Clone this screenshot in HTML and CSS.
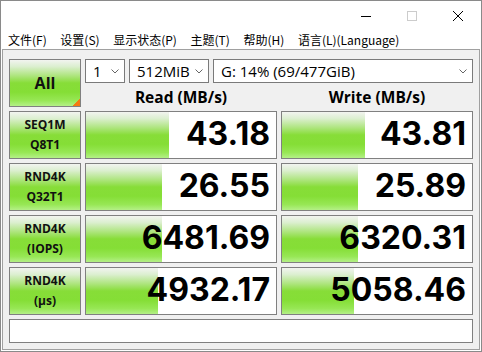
FILE: index.html
```html
<!DOCTYPE html>
<html lang="zh">
<head>
<meta charset="utf-8">
<title>CrystalDiskMark</title>
<link rel="stylesheet" href="styles.css">
</head>
<body>
<div class="window">
  <div class="titlebar">
    <div class="capbtn"><svg width="10" height="10" viewBox="0 0 10 10"><path d="M0 5.5H10" stroke="#000" stroke-width="1"/></svg></div>
    <div class="capbtn"><svg width="10" height="10" viewBox="0 0 10 10"><rect x="0.5" y="0.5" width="9" height="9" fill="none" stroke="#cccccc" stroke-width="1"/></svg></div>
    <div class="capbtn"><svg width="10" height="10" viewBox="0 0 10 10"><path d="M0 0L10 10M10 0L0 10" stroke="#000" stroke-width="1"/></svg></div>
  </div>
  <div class="menubar">
    <span class="mi">文件(F)</span>
    <span class="mi">设置(S)</span>
    <span class="mi">显示状态(P)</span>
    <span class="mi">主题(T)</span>
    <span class="mi">帮助(H)</span>
    <span class="mi">语言(L)(Language)</span>
  </div>
  <div class="frame">
    <div class="grid">
      <div class="btn all">All</div>
      <div class="top">
        <div class="combos">
          <div class="combo c1"><span>1</span><svg class="chev" width="8" height="5" viewBox="0 0 8 5"><path d="M0.5 0.5L4 4L7.5 0.5" fill="none" stroke="#666" stroke-width="1"/></svg></div>
          <div class="combo c2"><span>512MiB</span><svg class="chev" width="8" height="5" viewBox="0 0 8 5"><path d="M0.5 0.5L4 4L7.5 0.5" fill="none" stroke="#666" stroke-width="1"/></svg></div>
          <div class="combo c3"><span>G: 14% (69/477GiB)</span><svg class="chev" width="8" height="5" viewBox="0 0 8 5"><path d="M0.5 0.5L4 4L7.5 0.5" fill="none" stroke="#666" stroke-width="1"/></svg></div>
        </div>
        <div class="heads">
          <div class="head">Read (MB/s)</div>
          <div class="head">Write (MB/s)</div>
        </div>
      </div>

      <div class="btn lbl"><span>SEQ1M</span><span>Q8T1</span></div>
      <div class="val" style="--w:83px">43.18</div>
      <div class="val" style="--w:83px">43.81</div>

      <div class="btn lbl"><span>RND4K</span><span>Q32T1</span></div>
      <div class="val" style="--w:76px">26.55</div>
      <div class="val" style="--w:76px">25.89</div>

      <div class="btn lbl"><span>RND4K</span><span>(IOPS)</span></div>
      <div class="val" style="--w:76px">6481.69</div>
      <div class="val" style="--w:76px">6320.31</div>

      <div class="btn lbl"><span>RND4K</span><span>(μs)</span></div>
      <div class="val" style="--w:72px">4932.17</div>
      <div class="val" style="--w:72px">5058.46</div>

      <div class="status"></div>
    </div>
  </div>
</div>
</body>
</html>
```

FILE: styles.css
```css
html, body {
  margin: 0;
  padding: 0;
  background: #ffffff;
  overflow: hidden;
}

.window {
  box-sizing: border-box;
  width: 482px;
  height: 352px;
  border: 1px solid #8a8a8a;
  background: #ffffff;
  display: flex;
  flex-direction: column;
  font-family: "Open Sans", "Noto Sans", sans-serif;
}

.titlebar {
  height: 29px;
  display: flex;
  justify-content: flex-end;
  flex: none;
}

.capbtn {
  width: 46px;
  height: 29px;
  display: flex;
  align-items: center;
  justify-content: center;
}

.capbtn svg {
  display: block;
}

.menubar {
  height: 19px;
  flex: none;
  display: flex;
  gap: 13.6px;
  padding-left: 7px;
  font-family: "Noto Sans CJK SC", "Noto Sans", sans-serif;
  font-size: 12px;
  line-height: 19px;
  color: #000;
}

.mi {
  white-space: nowrap;
}

.frame {
  flex: 1;
  margin: 0 1px 1px 1px;
  border: 1px solid #a0a0a0;
  background: #f0f0f0;
  padding: 9px 5px 5px 6px;
}

.grid {
  display: grid;
  grid-template-columns: 72px 192px 192px;
  grid-template-rows: 48px 48px 48px 48px 48px 24px;
  column-gap: 4px;
  row-gap: 4px;
}

.btn {
  box-sizing: border-box;
  border: 1px solid #808080;
  background: linear-gradient(to bottom, #f2f4f0 0%, #dcefd0 14%, #aee57f 34%, #87dd38 50%, #85de36 70%, #97e755 88%, #b4f087 100%);
  color: #111;
  font-weight: 700;
  display: flex;
  flex-direction: column;
  align-items: center;
  justify-content: center;
}

.all {
  font-size: 16px;
  position: relative;
}

.all::after {
  content: "";
  position: absolute;
  right: 0;
  bottom: 0;
  width: 8px;
  height: 8px;
  background: linear-gradient(to top left, #f47a12 50%, transparent 50%);
}

.lbl {
  font-size: 12px;
  line-height: 20px;
}

.top {
  grid-column: 2 / 4;
  display: flex;
  flex-direction: column;
}

.combos {
  display: flex;
  gap: 4px;
  height: 24px;
}

.combo {
  box-sizing: border-box;
  height: 24px;
  border: 1px solid #7a7a7a;
  background: #ffffff;
  display: flex;
  align-items: center;
  justify-content: space-between;
  padding: 0 5px 0 7px;
  font-size: 15px;
  line-height: 22px;
  color: #000;
  white-space: nowrap;
}

.c1 { width: 40px; }
.c2 { width: 80px; }
.c3 { width: 260px; }

.chev {
  display: block;
  flex: none;
}

.heads {
  display: flex;
  gap: 4px;
  padding-top: 4px;
}

.head {
  width: 192px;
  text-align: center;
  font-weight: 700;
  font-size: 15.5px;
  line-height: 20px;
  color: #000;
}

.val {
  box-sizing: border-box;
  height: 48px;
  border: 1px solid #808080;
  background: linear-gradient(to bottom, #f2f4f0 0%, #dcefd0 14%, #aee57f 34%, #87dd38 50%, #85de36 70%, #97e755 88%, #b4f087 100%) no-repeat left top / var(--w) 100%, #ffffff;
  text-align: right;
  padding-right: 6px;
  font-family: "Inter", "Open Sans", sans-serif;
  font-variant-numeric: proportional-nums;
  font-feature-settings: "pnum" 1;
  font-weight: 700;
  font-size: 32px;
  line-height: 44px;
  color: #000;
  white-space: nowrap;
}

.status {
  grid-column: 1 / 4;
  box-sizing: border-box;
  border: 1px solid #808080;
  background: #ffffff;
}
```
